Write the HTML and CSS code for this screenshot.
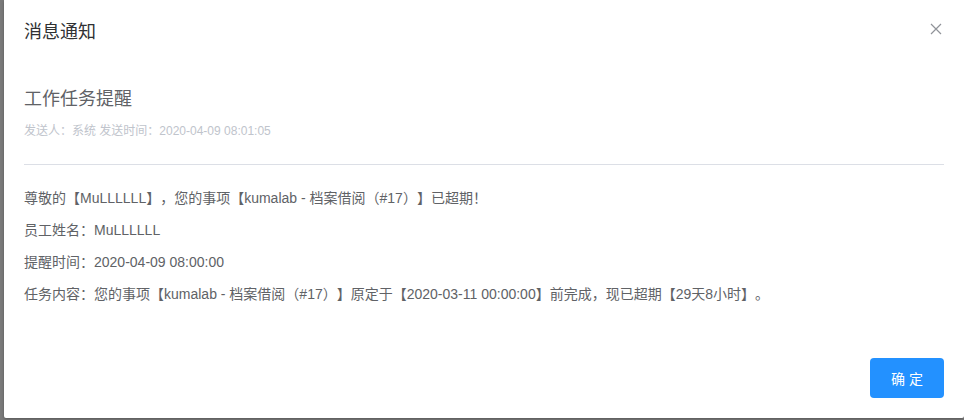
FILE: index.html
```html
<!DOCTYPE html>
<html lang="zh-CN">
<head>
<meta charset="utf-8">
<title>消息通知</title>
<link rel="stylesheet" href="styles.css">
</head>
<body>
<div class="mask">
  <div class="dialog">
    <div class="dialog-header">
      <span class="dialog-title">消息通知</span>
      <button class="dialog-close" type="button" aria-label="关闭">
        <svg width="12" height="12" viewBox="0 0 12 12"><path d="M1 1 L11 11 M11 1 L1 11" stroke="#909399" stroke-width="1.2" fill="none"/></svg>
      </button>
    </div>
    <div class="dialog-body">
      <h3 class="msg-title">工作任务提醒</h3>
      <div class="msg-meta">发送人：系统 发送时间：2020-04-09 08:01:05</div>
      <div class="msg-divider"></div>
      <div class="msg-content">
        <p>尊敬的【MuLLLLLL】，您的事项【kumalab - 档案借阅（#17）】已超期！</p>
        <p>员工姓名：MuLLLLLL</p>
        <p>提醒时间：2020-04-09 08:00:00</p>
        <p>任务内容：您的事项【kumalab - 档案借阅（#17）】原定于【2020-03-11 00:00:00】前完成，现已超期【29天8小时】。</p>
      </div>
    </div>
    <div class="dialog-footer">
      <button class="btn-primary" type="button">确 定</button>
    </div>
  </div>
</div>
</body>
</html>
```

FILE: styles.css
```css
* { margin: 0; padding: 0; box-sizing: border-box; }
html, body { height: 100%; }
body { background: #7a7a7a; font-family: "Liberation Sans", "Noto Sans CJK SC", sans-serif; overflow: hidden; text-spacing-trim: space-all; }
.mask { height: 100%; padding-left: 4px; }
.dialog { width: 960px; height: 418px; background: #fff; border-radius: 0 0 2px 2px; box-shadow: 0 1px 3px rgba(0,0,0,.3); display: flex; flex-direction: column; }
.dialog-header { padding: 20px 20px 10px; display: flex; justify-content: space-between; align-items: center; }
.dialog-title { font-size: 18px; line-height: 24px; color: #303133; }
.dialog-close { border: 0; background: none; width: 16px; height: 16px; display: flex; align-items: center; justify-content: center; cursor: pointer; margin-top: -6px; }
.dialog-body { padding: 30px 20px 0; flex: 1; }
.msg-title { font-size: 18px; font-weight: normal; line-height: 30px; color: #606266; }
.msg-meta { margin-top: 7px; font-size: 12px; line-height: 20px; color: #c0c4cc; }
.msg-divider { height: 1px; background: #dcdfe6; margin-top: 23px; }
.msg-content { padding-top: 17px; }
.msg-content p { font-size: 14px; line-height: 32px; color: #606266; }
.dialog-footer { padding: 10px 20px 20px; display: flex; justify-content: flex-end; }
.btn-primary { width: 74px; height: 40px; border: 0; border-radius: 4px; background: #2391ff; color: #fff; font-size: 14px; font-family: inherit; cursor: pointer; }
```
